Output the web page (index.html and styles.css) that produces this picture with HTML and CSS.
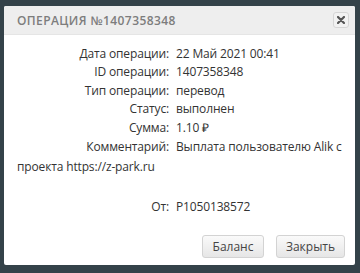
FILE: index.html
```html
<!DOCTYPE html>
<html>
<head>
<meta charset="utf-8">
<link rel="stylesheet" href="styles.css">
</head>
<body>
<div class="dialog">
  <div class="header">
    <span class="title">Операция №1407358348</span>
    <button class="close" aria-label="close">
      <svg width="8" height="8" viewBox="0 0 8 8"><path d="M1 1 L7 7 M7 1 L1 7" stroke="#555" stroke-width="2.2" stroke-linecap="round"/></svg>
    </button>
  </div>
  <div class="body">
    <div class="row"><span class="lbl">Дата операции:</span><span class="val">22 Май 2021 00:41</span></div>
    <div class="row"><span class="lbl">ID операции:</span><span class="val">1407358348</span></div>
    <div class="row"><span class="lbl">Тип операции:</span><span class="val">перевод</span></div>
    <div class="row"><span class="lbl">Статус:</span><span class="val">выполнен</span></div>
    <div class="row"><span class="lbl">Сумма:</span><span class="val">1.10 ₽</span></div>
    <div class="row comment"><span class="lbl">Комментарий:</span><span class="val">Выплата пользователю Alik с</span><br><span class="val">проекта https://z-park.ru</span></div>
    <div class="spacer"></div>
    <div class="row"><span class="lbl">От:</span><span class="val">P1050138572</span></div>
  </div>
  <div class="footer">
    <button class="btn balance">Баланс</button>
    <button class="btn closebtn">Закрыть</button>
  </div>
</div>
</body>
</html>
```
FILE: styles.css
```css
html, body {
  margin: 0;
  padding: 0;
  background: #344249;
}
body {
  padding: 6px 5px 8px 4px;
  font-family: "Open Sans", "Liberation Sans", sans-serif;
  color: #333;
}
.dialog {
  width: 351px;
  height: 259px;
  background: #fff;
  border-radius: 2px;
  display: flex;
  flex-direction: column;
}
.header {
  height: 28px;
  background: #eeeeee;
  border-bottom: 1px solid #e5e5e5;
  display: flex;
  align-items: center;
  justify-content: space-between;
  padding: 0 6px 0 13px;
  border-radius: 2px 2px 0 0;
}
.title {
  text-transform: uppercase;
  font-size: 12px;
  letter-spacing: 0.4px;
  color: #7d7d7d;
  font-weight: 600;
}
.close {
  width: 16px;
  height: 16px;
  padding: 0;
  border: 1px solid #d6d6d6;
  border-radius: 3px;
  background: #f2f2f2;
  display: flex;
  align-items: center;
  justify-content: center;
}
.body {
  padding: 10px 6px 0 13px;
  font-size: 12px;
  line-height: 18.4px;
  letter-spacing: -0.15px;
  flex: 1;
}
.row.comment {
  line-height: 20px;
}
.spacer {
  height: 20.6px;
}
.lbl {
  display: inline-block;
  width: 152px;
  text-align: right;
  margin-right: 7px;
}
.footer {
  display: flex;
  justify-content: flex-end;
  gap: 12px;
  padding: 0 10px 7px 0;
}
.btn {
  font-family: "Open Sans", "Liberation Sans", sans-serif;
  font-size: 12px;
  color: #444;
  height: 23px;
  padding: 0;
  border: 1px solid #d3d3d3;
  border-radius: 3px;
  background: linear-gradient(#fafafa, #e6e6e6);
}
.balance { width: 62px; }
.closebtn { width: 69px; }
```
